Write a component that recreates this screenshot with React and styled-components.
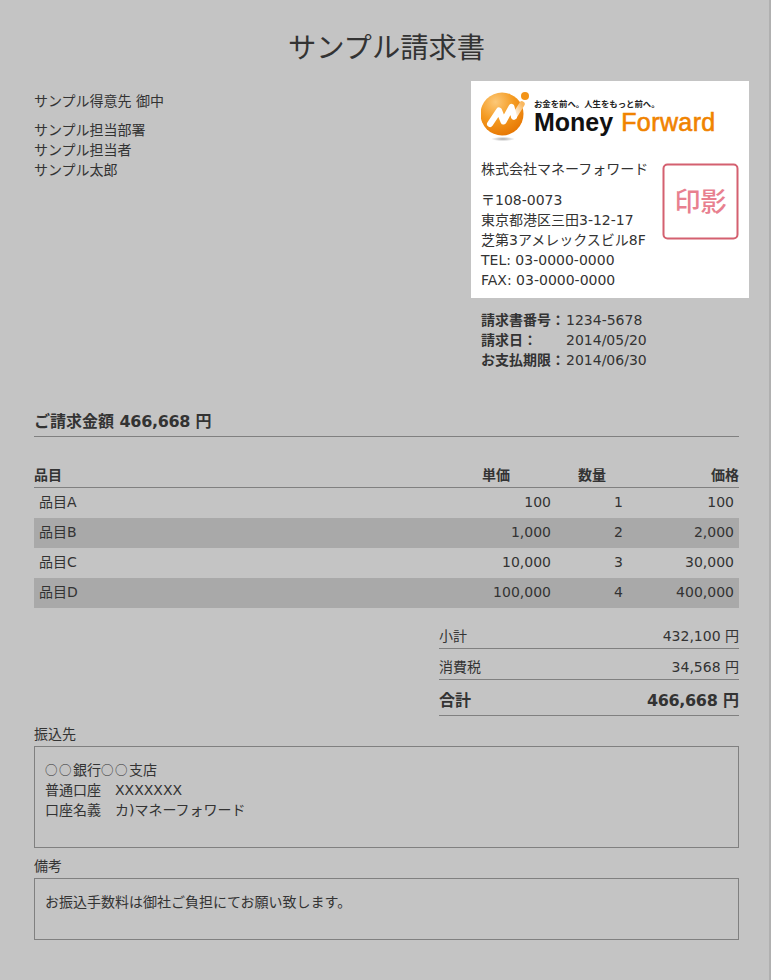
import React from 'react'
import styled, { createGlobalStyle } from 'styled-components'

const Global = createGlobalStyle`
html, body { margin:0; padding:0; background:#c4c4c4; }
body {
  font-family:"DejaVu Sans","Noto Sans CJK JP",sans-serif;
  font-size:14px;
  color:#333;
  width:771px;
  height:980px;
  overflow:hidden;
}
`
const Page = styled.div`
width:771px;
height:980px;
box-sizing:border-box;
padding:0 30px 0 34px;
border-right:2px solid #b0b0b0;
`
const Title = styled.h1`
margin:0;
padding-top:30px;
height:51px;
font-size:28.3px;
line-height:38px;
font-weight:400;
text-align:center;
`
const Head = styled.div`
display:flex;
justify-content:space-between;
align-items:flex-start;
margin-right:-10px;
`
const Client = styled.div`
padding-top:10px;
line-height:20px;
`
const ClientName = styled.div`
margin-bottom:9px;
`
const Aside = styled.div`
width:278px;
`
const Card = styled.div`
height:217px;
box-sizing:border-box;
background:#fff;
padding:10px 10px 0;
position:relative;
`
const LogoRow = styled.div`
height:60px;
display:flex;
gap:1px;
margin-bottom:8px;
`
const LogoText = styled.div`
display:flex;
flex-direction:column;
padding-top:6px;
`
const Tagline = styled.div`
font-family:"Noto Sans CJK JP",sans-serif;
font-size:8.4px;
line-height:12px;
font-weight:700;
color:#222;
white-space:nowrap;
`
const Brand = styled.div`
font-family:"Liberation Sans",sans-serif;
font-size:25px;
line-height:26px;
font-weight:700;
color:#111;
white-space:nowrap;
`
const BrandAccent = styled.span`
color:#f08300;
margin-left:8px;
font-weight:400;
-webkit-text-stroke:.6px #f08300;
letter-spacing:.4px;
`
const CardLine = styled.div`
line-height:20px;
white-space:nowrap;
`
const Company = styled(CardLine)`
margin-bottom:11px;
`
const Stamp = styled.div`
position:absolute;
left:191px;
top:82px;
width:77px;
height:77px;
box-sizing:border-box;
padding-bottom:4px;
color:#e8808f;
font-size:26px;
font-weight:500;
display:flex;
align-items:center;
justify-content:center;
font-family:"Noto Sans CJK JP",sans-serif;
`
const StampFrame = styled.svg`
position:absolute;
left:0;
top:0;
`
const Meta = styled.div`
padding:12px 0 0 10px;
display:grid;
grid-template-columns:85px 1fr;
line-height:20px;
`
const MetaKey = styled.div`
font-weight:700;
white-space:nowrap;
`
const Amount = styled.div`
margin-top:33px;
height:34px;
padding-top:6px;
line-height:26px;
font-size:16px;
font-weight:700;
border-bottom:1px solid #808080;
box-sizing:border-box;
`
const Figure = styled.span`
letter-spacing:-.35px;
`
const Table = styled.div`
margin-top:29px;
`
const Row = styled.div`
display:grid;
grid-template-columns:402px 120px 72px 111px;
height:30px;
line-height:28px;
background:${p => (p.$shade ? '#a9a9a9' : 'transparent')};
`
const HeadRow = styled(Row)`
height:22px;
line-height:18px;
font-weight:700;
border-bottom:1px solid #808080;
box-sizing:border-box;
`
const Cell = styled.div`
padding:0 5px;
text-align:${p => p.$align || 'left'};
`
const HeadCell = styled(Cell)`
padding:0;
`
const Totals = styled.div`
margin:10px 0 0 405px;
`
const TotalRow = styled.div`
display:flex;
justify-content:space-between;
height:${p => (p.$big ? '36px' : '31px')};
padding-top:${p => (p.$big ? '11px' : '8px')};
line-height:20px;
font-size:${p => (p.$big ? '16px' : '14px')};
font-weight:${p => (p.$big ? 700 : 400)};
border-bottom:1px solid #808080;
box-sizing:border-box;
`
const Label = styled.div`
line-height:20px;
height:20px;
margin:8px 0 2px;
`
const Box = styled.div`
border:1px solid #808080;
box-sizing:border-box;
padding:13px 10px 0;
line-height:20px;
height:${p => p.$h}px;
white-space:pre;
`
const Circle = styled.span`
font-family:"Noto Sans CJK JP",sans-serif;
font-size:12.5px;
letter-spacing:1.5px;
line-height:1;
`

const rows = [
  ['品目A', '100', '1', '100'],
  ['品目B', '1,000', '2', '2,000'],
  ['品目C', '10,000', '3', '30,000'],
  ['品目D', '100,000', '4', '400,000'],
]

const MoneyMark = () => (
  <svg width="52" height="60" viewBox="0 0 52 60">
    <defs>
      <radialGradient id="ball" cx="35%" cy="22%" r="85%">
        <stop offset="0" stopColor="#fcc878" />
        <stop offset=".5" stopColor="#f49a20" />
        <stop offset="1" stopColor="#e67400" />
      </radialGradient>
      <radialGradient id="shade" cx="50%" cy="50%" r="50%">
        <stop offset="0" stopColor="#aaa" />
        <stop offset="1" stopColor="#fff" />
      </radialGradient>
      <linearGradient id="tail" x1="0" y1="1" x2="1" y2="0">
        <stop offset="0" stopColor="#fff" />
        <stop offset="1" stopColor="#f9b860" />
      </linearGradient>
    </defs>
    <ellipse cx="22" cy="48" rx="12" ry="2.2" fill="url(#shade)" />
    <circle cx="21" cy="23" r="21.5" fill="url(#ball)" />
    <path d="M33 25.7 L41 13" fill="none" stroke="url(#tail)" strokeWidth="5.5" strokeLinecap="round" />
    <path d="M9 33 L18 19.5 L22.5 30.5 L30.5 16 L33 25.7" fill="none" stroke="#fff" strokeWidth="6" strokeLinecap="round" strokeLinejoin="round" />
    <circle cx="44" cy="5" r="4" fill="#f39418" />
  </svg>
)

const App = () => (
  <>
    <Global />
    <Page>
      <Title>サンプル請求書</Title>
      <Head>
        <Client>
          <ClientName>サンプル得意先 御中</ClientName>
          <div>サンプル担当部署</div>
          <div>サンプル担当者</div>
          <div>サンプル太郎</div>
        </Client>
        <Aside>
          <Card>
            <LogoRow>
              <MoneyMark />
              <LogoText>
                <Tagline>お金を前へ。人生をもっと前へ。</Tagline>
                <Brand>Money<BrandAccent>Forward</BrandAccent></Brand>
              </LogoText>
            </LogoRow>
            <Company>株式会社マネーフォワード</Company>
            <CardLine>〒108-0073</CardLine>
            <CardLine>東京都港区三田3-12-17</CardLine>
            <CardLine>芝第3アメレックスビル8F</CardLine>
            <CardLine>TEL: 03-0000-0000</CardLine>
            <CardLine>FAX: 03-0000-0000</CardLine>
            <Stamp>
              <StampFrame width="77" height="77" viewBox="0 0 77 77">
                <filter id="rough">
                  <feTurbulence type="fractalNoise" baseFrequency=".35" numOctaves="2" seed="4" />
                  <feDisplacementMap in="SourceGraphic" scale="1.4" />
                </filter>
                <rect x="1.5" y="1.5" width="74" height="74" rx="4" fill="none" stroke="#d4606f" strokeWidth="2" filter="url(#rough)" />
              </StampFrame>
              印影
            </Stamp>
          </Card>
          <Meta>
            <MetaKey>請求書番号：</MetaKey><div>1234-5678</div>
            <MetaKey>請求日：</MetaKey><div>2014/05/20</div>
            <MetaKey>お支払期限：</MetaKey><div>2014/06/30</div>
          </Meta>
        </Aside>
      </Head>
      <Amount>ご請求金額 <Figure>466,668</Figure> 円</Amount>
      <Table>
        <HeadRow>
          <HeadCell>品目</HeadCell>
          <HeadCell $align="center">単価</HeadCell>
          <HeadCell $align="center">数量</HeadCell>
          <HeadCell $align="right">価格</HeadCell>
        </HeadRow>
        {rows.map((r, i) => (
          <Row key={r[0]} $shade={i % 2 === 1}>
            <Cell>{r[0]}</Cell>
            <Cell $align="right">{r[1]}</Cell>
            <Cell $align="right">{r[2]}</Cell>
            <Cell $align="right">{r[3]}</Cell>
          </Row>
        ))}
      </Table>
      <Totals>
        <TotalRow><div>小計</div><div>432,100 円</div></TotalRow>
        <TotalRow><div>消費税</div><div>34,568 円</div></TotalRow>
        <TotalRow $big><div>合計</div><div><Figure>466,668</Figure> 円</div></TotalRow>
      </Totals>
      <Label>振込先</Label>
      <Box $h={102}>
        <Circle>○○</Circle>銀行<Circle>○○</Circle>支店{'\n'}
        普通口座　XXXXXXX{'\n'}
        口座名義　カ)マネーフォワード
      </Box>
      <Label>備考</Label>
      <Box $h={62}>お振込手数料は御社ご負担にてお願い致します。</Box>
    </Page>
  </>
)

export default App
